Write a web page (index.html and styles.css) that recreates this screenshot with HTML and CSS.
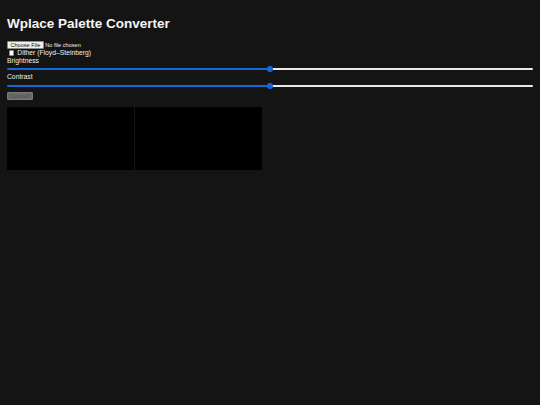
FILE: index.html
```html
<!DOCTYPE html>
<html lang="en">
<head>
<meta charset="utf-8">
<title>Wplace Palette Converter</title>
<link rel="stylesheet" href="styles.css">
</head>
<body>
<h1 class="title">Wplace Palette Converter</h1>
<div class="row"><input type="file" class="file"></div>
<label class="check"><input type="checkbox" class="box"><span class="check-text"> Dither (Floyd–Steinberg)</span></label>
<div class="field">
  <label class="lbl" for="b">Brightness</label>
  <input id="b" type="range" class="slider half" min="-100" max="100" value="0">
</div>
<div class="field">
  <label class="lbl" for="c">Contrast</label>
  <input id="c" type="range" class="slider half" min="-100" max="100" value="0">
</div>
<div class="actions"><button class="convert" disabled>Convert</button></div>
<div class="canvases">
  <canvas class="cv" width="300" height="150"></canvas>
  <canvas class="cv" width="300" height="150"></canvas>
</div>
</body>
</html>
```
FILE: styles.css
```css
html {
  background: #141414;
}
body {
  margin: 0;
  padding: 7px;
  background: #141414;
  color: #f0f0f0;
  font-family: "Liberation Sans", Arial, sans-serif;
  font-size: 6.75px;
}
.title {
  font-size: 13.5px;
  font-weight: bold;
  line-height: 15.5px;
  margin: 8.5px 0 9.5px;
  color: #f5f5f5;
}
.row {
  display: flex;
  align-items: center;
  height: 8.6px;
}
.file {
  font-family: "Liberation Sans", Arial, sans-serif;
  font-size: 5.6px;
  color: #f0f0f0;
}
.file::file-selector-button {
  font-family: "Liberation Sans", Arial, sans-serif;
  font-size: 5.6px;
  height: 8.4px;
  padding: 0 2.4px;
  margin-right: 1.7px;
  border: 0.6px solid #8a8a8a;
  border-radius: 1px;
  background: #efefef;
  color: #111;
}
.check {
  display: flex;
  align-items: center;
  height: 7.6px;
  line-height: 7.6px;
}
.box {
  width: 5.5px;
  height: 5.5px;
  margin: 0 0 0 1.7px;
  appearance: none;
  background: #fff;
  border: 0.6px solid #8a8a8a;
  border-radius: 1px;
  box-sizing: border-box;
}
.check-text {
  white-space: pre;
  color: #f0f0f0;
  padding-left: 1.3px;
}
.field {
  display: block;
}
.lbl {
  display: block;
  line-height: 7.8px;
}
.slider {
  display: block;
  width: 100%;
  height: 9px;
  margin: 0;
  appearance: none;
  -webkit-appearance: none;
  background: transparent;
}
.slider::-webkit-slider-runnable-track {
  height: 2.2px;
  border-radius: 1.1px;
  background: #e9e9e9;
}
.slider.half::-webkit-slider-runnable-track {
  background: linear-gradient(to right, #1767d6 0 50%, #e9e9e9 50% 100%);
}
.slider::-webkit-slider-thumb {
  -webkit-appearance: none;
  appearance: none;
  width: 5.6px;
  height: 5.6px;
  margin-top: -1.7px;
  border-radius: 50%;
  background: #1767d6;
  border: none;
}
.actions {
  margin-top: 1.6px;
  display: flex;
}
.convert {
  font-family: "Liberation Sans", Arial, sans-serif;
  font-size: 5.6px;
  width: 26px;
  height: 8.4px;
  padding: 0;
  border: 0.6px solid #7a7a7a;
  border-radius: 1px;
  background: #6a6a6a;
  color: #505050;
}
.canvases {
  display: flex;
  gap: 1.7px;
  margin-top: 6.7px;
}
.cv {
  display: block;
  width: 126.5px;
  height: 63.3px;
  background: #000;
}
```
